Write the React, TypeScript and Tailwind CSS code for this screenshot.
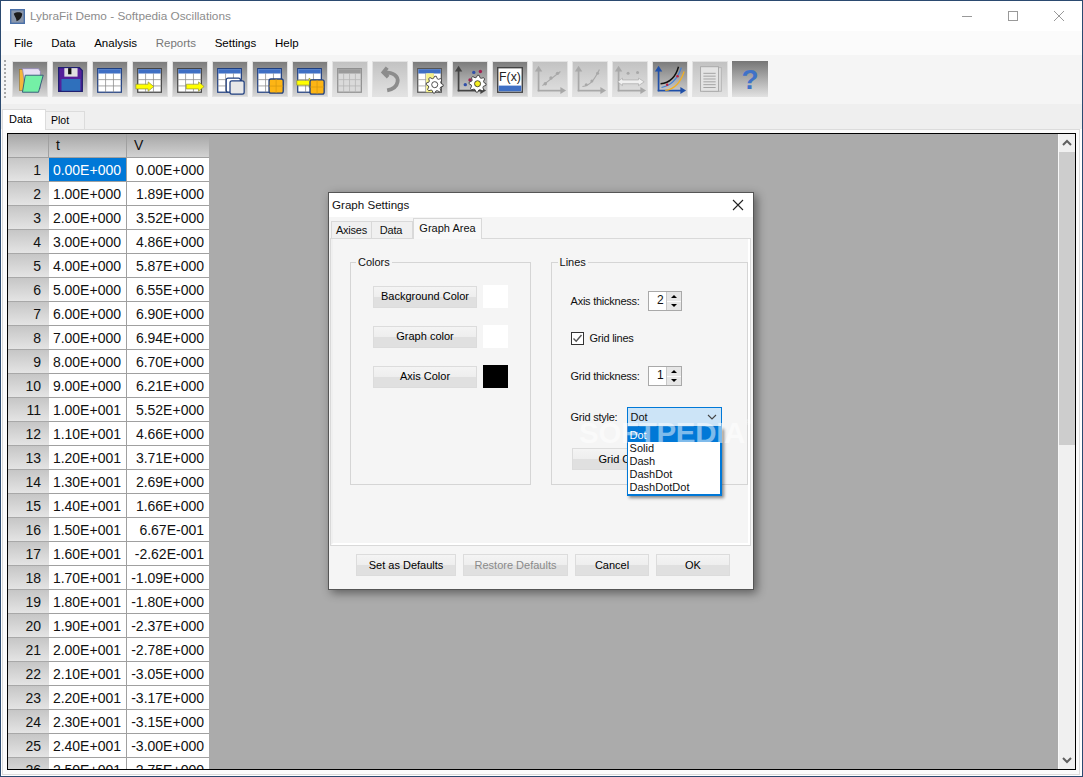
import React from "react";

const menus = ["File", "Data", "Analysis", "Reports", "Settings", "Help"];

const values = [
  "0.00E+000", "1.89E+000", "3.52E+000", "4.86E+000", "5.87E+000", "6.55E+000", "6.90E+000",
  "6.94E+000", "6.70E+000", "6.21E+000", "5.52E+000", "4.66E+000", "3.71E+000", "2.69E+000",
  "1.66E+000", "6.67E-001", "-2.62E-001", "-1.09E+000", "-1.80E+000", "-2.37E+000", "-2.78E+000",
  "-3.05E+000", "-3.17E+000", "-3.15E+000", "-3.00E+000", "-2.75E+000",
];

const tValue = (i: number) => (i < 10 ? `${i}.00E+000` : `${Math.floor(i / 10)}.${i % 10}0E+001`);

// table glyph used by most of the toolbar buttons
function Sheet({ x = 5, y = 7, w = 25, h = 25, edge = "#1f3f80", head = "#3f6fc4", line = "#8a8a8a", fill = "#ffffff", cols = 3, rows = 3 }) {
  const top = y + 5;
  return (
    <g>
      <rect x={x} y={y} width={w} height={h} fill={fill} stroke={edge} strokeWidth="1.3" />
      <rect x={x + 0.6} y={y + 0.6} width={w - 1.2} height={4.6} fill={head} />
      {Array.from({ length: cols - 1 }).map((_, i) => (
        <line key={i} x1={x + ((i + 1) * w) / cols} x2={x + ((i + 1) * w) / cols} y1={top} y2={y + h} stroke={line} strokeWidth="0.8" />
      ))}
      {Array.from({ length: rows - 1 }).map((_, i) => (
        <line key={i} y1={top + ((i + 1) * (h - 5)) / rows} y2={top + ((i + 1) * (h - 5)) / rows} x1={x} x2={x + w} stroke={line} strokeWidth="0.8" />
      ))}
    </g>
  );
}

function Arrow({ x, y }: { x: number; y: number }) {
  return (
    <polygon
      points={`${x},${y + 2.5} ${x + 13},${y + 2.5} ${x + 13},${y} ${x + 19},${y + 5} ${x + 13},${y + 10} ${x + 13},${y + 7.5} ${x},${y + 7.5}`}
      fill="#ffff00"
      stroke="#8a8a3a"
      strokeWidth="0.7"
    />
  );
}

function OrangeBox({ x, y }: { x: number; y: number }) {
  return (
    <g>
      <rect x={x} y={y} width={15} height={15} rx="2" fill="#fdb515" stroke="#1f3f80" strokeWidth="1.4" />
      <line x1={x + 7.5} x2={x + 7.5} y1={y} y2={y + 15} stroke="#d99a10" strokeWidth="0.8" />
      <line x1={x} x2={x + 15} y1={y + 7.5} y2={y + 7.5} stroke="#d99a10" strokeWidth="0.8" />
    </g>
  );
}

function gearPoints(cx: number, cy: number, outer: number, inner: number, teeth: number) {
  const pts: string[] = [];
  for (let i = 0; i < teeth * 4; i++) {
    const r = i % 4 < 2 ? outer : inner;
    const a = (i * Math.PI * 2) / (teeth * 4);
    pts.push(`${(cx + r * Math.cos(a)).toFixed(1)},${(cy + r * Math.sin(a)).toFixed(1)}`);
  }
  return pts.join(" ");
}

function Gear({ x, y, hub = "#ffffff" }: { x: number; y: number; hub?: string }) {
  return (
    <g>
      <polygon points={gearPoints(x, y, 9, 6.8, 8)} fill="#ffffff" stroke="#333333" strokeWidth="0.9" />
      <circle cx={x} cy={y} r="3.2" fill={hub} stroke="#333333" strokeWidth="0.9" />
    </g>
  );
}

function Axes({ color, x = 6, y = 31 }: { color: string; x?: number; y?: number }) {
  return (
    <g fill={color}>
      <rect x={x} y={9} width="1.8" height={y - 9} />
      <rect x={x} y={y - 1.6} width="25" height="1.8" />
      <polygon points={`${x + 0.9},4 ${x - 3},10 ${x + 4.8},10`} />
      <polygon points={`${x + 30},${y - 0.7} ${x + 24},${y - 4.5} ${x + 24},${y + 3}`} />
    </g>
  );
}

const icons: { disabled?: boolean; plain?: boolean; art: React.ReactNode }[] = [
  {
    art: (
      <g>
        <rect x="7" y="8" width="11" height="22" fill="#f5b63a" stroke="#9a7a30" strokeWidth="0.7" />
        <path d="M10 7 H27 L29 10 V28 H13 Z" fill="#e8e0f4" stroke="#8c80b0" strokeWidth="0.8" />
        <polygon points="13,14 32,14 27,32 10,32" fill="#74f0a6" stroke="#345a78" strokeWidth="1" />
      </g>
    ),
  },
  {
    art: (
      <g>
        <path d="M6 6 H28 L31 9 V31 H6 Z" fill="#55209a" stroke="#1f1f70" strokeWidth="1.4" />
        <rect x="12" y="6.5" width="14" height="9" fill="#e0e0e0" />
        <rect x="16" y="6.5" width="3.5" height="6.5" fill="#111111" />
        <rect x="9" y="18" width="20" height="12.5" fill="#2f70bc" />
      </g>
    ),
  },
  { art: <Sheet /> },
  {
    art: (
      <g>
        <Sheet edge="#444444" />
        <Arrow x={3} y={21} />
      </g>
    ),
  },
  {
    art: (
      <g>
        <Sheet edge="#444444" />
        <Arrow x={14} y={21} />
      </g>
    ),
  },
  {
    art: (
      <g>
        <Sheet />
        <rect x="14" y="17" width="15" height="15" rx="2" fill="#ffffff" stroke="#1f3f80" strokeWidth="1.3" />
        <rect x="18" y="20" width="15" height="14" rx="2" fill="#e8e8e8" stroke="#1f3f80" strokeWidth="1.3" />
      </g>
    ),
  },
  {
    art: (
      <g>
        <Sheet />
        <OrangeBox x={17} y={18} />
      </g>
    ),
  },
  {
    art: (
      <g>
        <Sheet />
        <Arrow x={4} y={17} />
        <OrangeBox x={18} y={19} />
      </g>
    ),
  },
  {
    disabled: true,
    art: <Sheet edge="#8f8f8f" head="#9a9a9a" line="#b4b4b4" fill="#dadada" cols={4} />,
  },
  {
    disabled: true,
    art: <path d="M15 6 L11 11 L16 16 M12 11 C22 11 27 15 26 21 C25 27 20 29 15 30" fill="none" stroke="#8c8c8c" strokeWidth="4" />,
  },
  {
    art: (
      <g>
        <Sheet edge="#555555" line="#9a9a9a" />
        <rect x="14" y="12" width="8" height="20" fill="#f6f28a" />
        <Gear x={23} y={24} />
      </g>
    ),
  },
  {
    art: (
      <g>
        <Axes color="#444444" x={5} />
        <circle cx="13" cy="24" r="1.8" fill="#3150a8" />
        <circle cx="18" cy="19" r="1.8" fill="#a02050" />
        <circle cx="22" cy="11" r="1.8" fill="#3150a8" />
        <circle cx="29" cy="10" r="1.8" fill="#a02050" />
        <Gear x={26} y={23} hub="#f6ee20" />
      </g>
    ),
  },
  {
    art: (
      <g>
        <rect x="5" y="6" width="26" height="26" fill="#ffffff" stroke="#444444" strokeWidth="1.5" />
        <text x="18" y="20" textAnchor="middle" fontSize="13" fill="#222222" className="font-['Liberation_Sans',sans-serif]">F(x)</text>
        <rect x="6" y="25" width="24" height="6" fill="#3f6fc4" />
      </g>
    ),
  },
  {
    disabled: true,
    art: (
      <g>
        <Axes color="#a8a8a8" x={5} />
        <line x1="10" x2="29" y1="25" y2="10" stroke="#a8a8a8" strokeWidth="1.2" />
        <circle cx="13" cy="23" r="1.8" fill="#a8a8a8" />
        <circle cx="19" cy="17" r="1.8" fill="#a8a8a8" />
        <circle cx="26" cy="12" r="1.8" fill="#a8a8a8" />
      </g>
    ),
  },
  {
    disabled: true,
    art: (
      <g>
        <Axes color="#a8a8a8" x={5} />
        <path d="M10 26 C18 25 22 20 28 8" fill="none" stroke="#a8a8a8" strokeWidth="1.2" />
        <circle cx="14" cy="24" r="1.6" fill="#a8a8a8" />
        <circle cx="20" cy="20" r="1.6" fill="#a8a8a8" />
        <circle cx="26" cy="12" r="1.6" fill="#a8a8a8" />
      </g>
    ),
  },
  {
    disabled: true,
    art: (
      <g>
        <Axes color="#a8a8a8" x={5} />
        <circle cx="16" cy="12" r="1.6" fill="#a8a8a8" />
        <circle cx="26" cy="11" r="1.6" fill="#a8a8a8" />
        <polygon points="5,21 10,17 10,19 27,19 27,17 33,21 27,25 27,23 10,23 10,25" fill="#f0f0f0" stroke="#a8a8a8" strokeWidth="0.7" />
      </g>
    ),
  },
  {
    art: (
      <g>
        <Axes color="#1f4fa8" x={5} />
        <path d="M8 23 C18 22 24 16 27 5" fill="none" stroke="#111111" strokeWidth="1.5" />
        <path d="M9 27 C20 25 26 18 30 6" fill="none" stroke="#3f7fd8" strokeWidth="1.3" />
        <path d="M13 30 C22 29 29 22 33 10" fill="none" stroke="#f4b020" strokeWidth="1.3" />
        <circle cx="15" cy="24" r="1.3" fill="#c02040" />
        <circle cx="26" cy="15" r="1.3" fill="#c02040" />
      </g>
    ),
  },
  {
    disabled: true,
    art: (
      <g>
        <rect x="11" y="6" width="19" height="25" fill="#dcdcdc" stroke="#b4b4b4" />
        <rect x="8" y="5" width="19" height="26" fill="#e4e4e4" stroke="#a8a8a8" />
        {[12, 15, 18, 21, 24, 27].map((y) => (
          <line key={y} x1="11" x2="24" y1={y} y2={y} stroke="#a0a0a0" />
        ))}
      </g>
    ),
  },
  {
    plain: true,
    art: (
      <text x="18" y="28" textAnchor="middle" fontSize="28" fontWeight="700" fill="#3f72c8" className="font-['Liberation_Sans',sans-serif]">?</text>
    ),
  },
];

function ToolButton({ icon }: { icon: (typeof icons)[number] }) {
  const look = icon.plain
    ? "bg-[linear-gradient(#767676,#e2e2e2)]"
    : icon.disabled
      ? "border border-[#e2e2e2] bg-[linear-gradient(#c2c2c2,#e2e2e2)]"
      : "border border-[#e0e0e0] bg-[linear-gradient(#7c7c7c,#d6d6d6)]";
  return (
    <div className={`w-[36px] h-[36px] shrink-0 ${look}`}>
      <svg viewBox="0 0 36 36" className={icon.plain ? "w-[36px] h-[36px]" : "w-[34px] h-[34px]"}>
        {icon.art}
      </svg>
    </div>
  );
}

function WinButton({ children, className = "", disabled = false }: { children: React.ReactNode; className?: string; disabled?: boolean }) {
  return (
    <div
      className={`h-[22px] flex items-center justify-center border border-[#dcdcdc] bg-[linear-gradient(#f4f4f4_0%,#eeeeee_48%,#e0e0e0_52%,#e0e0e0_100%)] shrink-0 ${disabled ? "text-[#8a8a8a]" : "text-black"} ${className}`}
    >
      {children}
    </div>
  );
}

function Spinner({ value }: { value: string }) {
  return (
    <div className="w-[34px] h-[20px] border border-[#a9a9a9] bg-white flex shrink-0">
      <div className="flex-1 text-right pr-[2px] leading-[16px] text-[12px]">{value}</div>
      <div className="w-[15px] flex flex-col bg-[#e6e6e6] border-l border-[#c8c8c8]">
        <div className="flex-1 flex items-center justify-center border-b border-[#fafafa]">
          <div className="w-0 h-0 border-x-[3px] border-x-transparent border-b-[3px] border-b-black" />
        </div>
        <div className="flex-1 flex items-center justify-center">
          <div className="w-0 h-0 border-x-[3px] border-x-transparent border-t-[3px] border-t-black" />
        </div>
      </div>
    </div>
  );
}

function ColorRow({ label, swatch }: { label: string; swatch: string }) {
  return (
    <div className="flex items-center gap-[6px]">
      <WinButton className="w-[104px]">{label}</WinButton>
      <div className={`w-[25px] h-[23px] ${swatch}`} />
    </div>
  );
}

function GraphSettings() {
  return (
    <div className="absolute left-[327px] top-[191px] w-[426px] h-[398px] border border-[#555555] bg-[#f5f5f5] shadow-[3px_3px_9px_rgba(0,0,0,0.45)] text-[11px] leading-[13px] text-[#111111] flex flex-col">
      <div className="h-[24px] shrink-0 bg-white flex items-center pl-[3px] pr-[9px] pb-[1px] justify-between">
        <span className="text-[11.6px]">Graph Settings</span>
        <svg width="12" height="12" viewBox="0 0 12 12" stroke="#222222" strokeWidth="1.1">
          <path d="M1 1 L11 11 M11 1 L1 11" />
        </svg>
      </div>

      <div className="h-[21px] shrink-0 flex items-end pl-[2px]">
        <div className="w-[41px] h-[17px] flex items-center justify-center bg-[#f0f0f0] border border-b-0 border-[#d9d9d9] pt-[1px] tracking-[-0.2px]">Axises</div>
        <div className="w-[41px] h-[17px] flex items-center justify-center bg-[#f0f0f0] border-t border-r border-[#d9d9d9] pt-[1px] pr-[2px] tracking-[-0.2px]">Data</div>
        <div className="w-[69px] h-[21px] flex items-center justify-center bg-[#f8f8f8] border border-b-0 border-[#d9d9d9] pb-[2px] -mb-[1px] relative z-10">Graph Area</div>
      </div>

      <div className="h-[308px] shrink-0 ml-[1px] mr-[2px] border border-[#d9d9d9]">
        <div className="h-full border-x-2 border-b-2 border-white border-l-[#f0f0f0] pl-[17px] pt-[17px] flex gap-[20px] relative">
          <fieldset className="w-[182px] h-[229px] border border-[#d5d5d5]">
            <legend className="ml-[5px] px-[2px] leading-[13px]">Colors</legend>
            <div className="flex flex-col gap-[17px] pl-[22px] pt-[16px]">
              <ColorRow label="Background Color" swatch="bg-white" />
              <ColorRow label="Graph color" swatch="bg-white" />
              <ColorRow label="Axis Color" swatch="bg-black" />
            </div>
          </fieldset>

          <fieldset className="w-[199px] h-[229px] border border-[#d5d5d5]">
            <legend className="ml-[6px] px-[2px] leading-[13px]">Lines</legend>
            <div className="flex flex-col pl-[19px] pt-[22px]">
              <div className="flex items-center">
                <span className="w-[77px] tracking-[-0.25px]">Axis thickness:</span>
                <Spinner value="2" />
              </div>
              <div className="flex items-center gap-[6px] mt-[21px]">
                <div className="w-[13px] h-[13px] border border-[#333333] bg-white flex items-center justify-center">
                  <svg width="11" height="11" viewBox="0 0 11 11" fill="none" stroke="#555555" strokeWidth="1.4">
                    <path d="M1.5 5.5 L4.2 8.2 L9.5 2" />
                  </svg>
                </div>
                <span className="tracking-[-0.25px]">Grid lines</span>
              </div>
              <div className="flex items-center mt-[21px]">
                <span className="w-[77px] tracking-[-0.25px]">Grid thickness:</span>
                <Spinner value="1" />
              </div>
              <div className="flex items-center mt-[21px]">
                <span className="w-[56px] tracking-[-0.25px]">Grid style:</span>
                <div className="relative w-[95px] h-[20px] border border-[#0078d7] bg-[#cce4f7] flex items-center justify-between pl-[3px] pr-[4px]">
                  <span>Dot</span>
                  <svg width="10" height="6" viewBox="0 0 10 6" fill="none" stroke="#444444" strokeWidth="1.1">
                    <path d="M1 1 L5 5 L9 1" />
                  </svg>
                  <div className="absolute -left-[1px] top-[19px] w-[95px] h-[69px] border border-[#0078d7] border-r-2 border-b-2 bg-white z-20 shadow-[2px_2px_3px_rgba(0,0,0,0.45)]">
                    <div className="bg-[#0078d7] text-white pl-[2px] h-[14px] leading-[15px]">Dot</div>
                    <div className="pl-[2px]">Solid</div>
                    <div className="pl-[2px]">Dash</div>
                    <div className="pl-[2px]">DashDot</div>
                    <div className="pl-[2px]">DashDotDot</div>
                  </div>
                </div>
              </div>
              <WinButton className="w-[104px] ml-[1px] mt-[21px]">Grid Color</WinButton>
            </div>
          </fieldset>
        </div>
      </div>

      <div className="flex gap-[7px] pl-[27px] pt-[8px]">
        <WinButton className="w-[100px]">Set as Defaults</WinButton>
        <WinButton className="w-[105px]" disabled>Restore Defaults</WinButton>
        <WinButton className="w-[74px]">Cancel</WinButton>
        <WinButton className="w-[74px]">OK</WinButton>
      </div>

      <div className="absolute left-[250px] top-[223px] z-30 flex items-start text-[29.5px] leading-[34px] font-bold text-white/50 tracking-[-0.3px] pointer-events-none">
        SOFTPEDIA
        <span className="text-[8px] leading-[14px] font-normal">®</span>
      </div>
    </div>
  );
}

export default function App() {
  return (
    <div className="relative w-[1083px] h-[777px] overflow-hidden border border-[#2b4a70] bg-white flex flex-col font-['Liberation_Sans',sans-serif]">
      <div className="h-[30px] shrink-0 bg-white flex items-center pl-[9px]">
        <svg width="15" height="15" viewBox="0 0 16 16" className="shrink-0">
          <rect width="16" height="16" fill="#4a70a8" />
          <rect x="1.5" y="1.5" width="13" height="13" fill="#8a97ac" />
          <path d="M4 5 C7 3 11 3 13 5 C13 9 10 12 7 13 C7 10 5 8 4 5 Z" fill="#1c1c1c" />
        </svg>
        <span className="ml-[5px] mt-[1px] text-[11.8px] text-[#8c8c8c]">LybraFit Demo - Softpedia Oscillations</span>
        <div className="ml-auto flex text-[#999999]">
          <div className="w-[46px] flex justify-center">
            <svg width="12" height="12" viewBox="0 0 12 12" stroke="currentColor"><path d="M1 6.5 H11" /></svg>
          </div>
          <div className="w-[46px] flex justify-center">
            <svg width="12" height="12" viewBox="0 0 12 12" stroke="currentColor" fill="none"><rect x="1.5" y="1.5" width="9" height="9" /></svg>
          </div>
          <div className="w-[46px] flex justify-center">
            <svg width="12" height="12" viewBox="0 0 12 12" stroke="currentColor"><path d="M1 1 L11 11 M11 1 L1 11" /></svg>
          </div>
        </div>
      </div>

      <div className="h-[24px] shrink-0 bg-[#fbfbfb] flex items-center gap-[18.7px] pl-[13px] pt-[1px] text-[11.5px] text-black">
        {menus.map((m) => (
          <span key={m} className={m === "Reports" ? "text-[#777777]" : ""}>{m}</span>
        ))}
      </div>

      <div className="h-[49px] shrink-0 bg-[#f5f5f5] flex items-center pl-[3px] pb-[1px]">
        <div className="h-[38px] border-l-2 border-dotted border-[#a8a8a8] mr-[6px]" />
        <div className="flex gap-[4px]">
          {icons.map((icon, i) => (
            <ToolButton key={i} icon={icon} />
          ))}
        </div>
      </div>

      <div className="h-[25px] shrink-0 bg-[#efefef] flex items-end pl-[1px] text-[10.5px] text-black">
        <div className="w-[44px] h-[21px] bg-white border border-b-0 border-[#dcdcdc] flex items-center pl-[6px] -mb-[1px] relative z-10 pb-[1px] text-[11px]">Data</div>
        <div className="w-[39px] h-[18px] bg-[#f1f1f1] border-t border-r border-[#dcdcdc] flex items-center pl-[5px]">Plot</div>
      </div>

      <div className="flex-1 min-h-0 ml-[1px] mr-[2px] mb-[1px] border border-[#dcdcdc] bg-[#fbfbfb] pl-[4px] pr-[3px] pt-[3px] pb-[4px]">
        <div className="h-full border border-black flex">
          <div className="flex-1 min-w-0 bg-[#ababab] overflow-hidden text-[14px] text-[#111111]">
            <div className="flex h-[24px] w-[201px]">
              <div className="w-[41px] bg-[linear-gradient(#a6a6a6,#d2d2d2)] border-r border-b border-[#a0a0a0]" />
              <div className="w-[78px] bg-[linear-gradient(#a6a6a6,#d2d2d2)] border-r border-b border-[#a0a0a0] pl-[7px] leading-[22px]">t</div>
              <div className="w-[82px] bg-[linear-gradient(#a6a6a6,#d2d2d2)] border-b border-[#a0a0a0] pl-[7px] leading-[22px]">V</div>
            </div>
            {values.map((v, i) => (
              <div key={i} className="flex h-[24px] w-[201px]">
                <div className="w-[41px] bg-[linear-gradient(#c6c6c6,#e4e4e4)] border-b border-[#a8a8a8] text-right pr-[8px] leading-[25px]">{i + 1}</div>
                <div className={`w-[78px] border-r border-b border-[#a0a0a0] text-right pr-[5px] leading-[25px] ${i === 0 ? "bg-[#0078d7] text-white" : "bg-white"}`}>
                  {tValue(i)}
                </div>
                <div className="w-[82px] bg-white border-b border-[#a0a0a0] text-right pr-[5px] leading-[25px]">{v}</div>
              </div>
            ))}
          </div>
          <div className="w-[17px] shrink-0 bg-[#f0f0f0] border-l border-[#f8f8f8] flex flex-col">
            <div className="h-[18px] flex items-center justify-center">
              <svg width="10" height="8" viewBox="0 0 10 8" fill="none" stroke="#606060" strokeWidth="2"><path d="M1 6 L5 2 L9 6" /></svg>
            </div>
            <div className="h-[293px] bg-[#cdcdcd]" />
            <div className="mt-auto h-[18px] flex items-center justify-center">
              <svg width="10" height="8" viewBox="0 0 10 8" fill="none" stroke="#606060" strokeWidth="2"><path d="M1 2 L5 6 L9 2" /></svg>
            </div>
          </div>
        </div>
      </div>

      <GraphSettings />
    </div>
  );
}
